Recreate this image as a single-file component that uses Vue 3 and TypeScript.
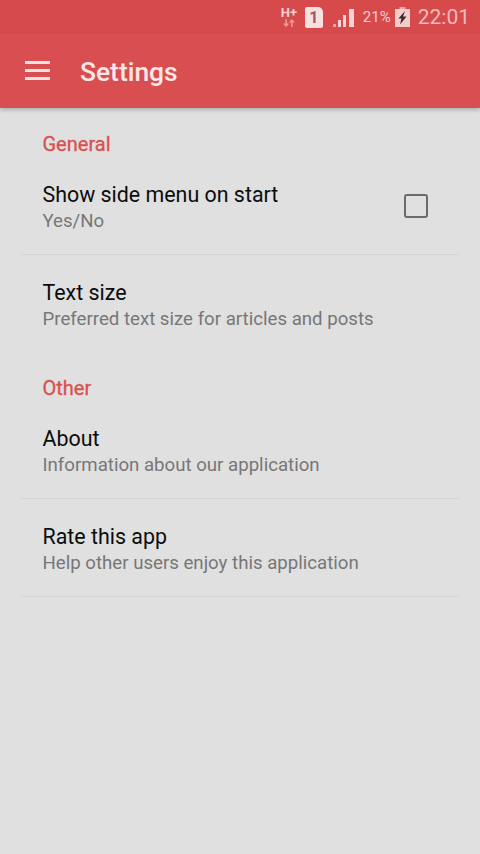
<script setup lang="ts">
interface Row { title: string; sub: string; check?: boolean; divider: boolean }
interface Section { name: string; rows: Row[] }
const sections: Section[] = [
  { name: 'General', rows: [
    { title: 'Show side menu on start', sub: 'Yes/No', check: true, divider: true },
    { title: 'Text size', sub: 'Preferred text size for articles and posts', divider: false },
  ]},
  { name: 'Other', rows: [
    { title: 'About', sub: 'Information about our application', divider: true },
    { title: 'Rate this app', sub: 'Help other users enjoy this application', divider: true },
  ]},
]
</script>

<template>
  <div class="page">
    <div class="status">
      <div class="net"><span class="hp">H+</span><svg width="14" height="8" viewBox="0 0 12 7"><path d="M3.500 0v6M1.500 4l2 2 2-2M8.500 7V1M6.500 3l2-2 2 2" fill="none" stroke="#ee9a9a" stroke-width="1.300"/></svg></div>
      <div class="sim">1</div>
      <svg class="signal" width="22" height="20" viewBox="0 0 22 20">
        <rect x="0" y="17" width="3" height="3" fill="#f0a0a0"/>
        <rect x="5" y="13" width="3" height="7" fill="#f8d4d4"/>
        <rect x="10" y="8" width="3" height="12" fill="#f8d4d4"/>
        <rect x="16" y="2" width="5" height="18" fill="#f8d4d4"/>
      </svg>
      <span class="pct">21%</span>
      <svg class="batt" width="15" height="20" viewBox="0 0 15 20">
        <rect x="4.500" y="0" width="6" height="3" fill="#eda9a9"/>
        <rect x="0" y="2" width="15" height="18" fill="#f3cccc"/>
        <path d="M10 4 3.500 11.500H6.500L5 17.500 11.500 9.500H8Z" fill="#3a2626"/>
      </svg>
      <span class="time">22:01</span>
    </div>
    <header class="bar">
      <div class="burger"><i></i><i></i><i></i></div>
      <h1>Settings</h1>
    </header>
    <main class="list">
      <section v-for="s in sections" :key="s.name" class="section">
        <h2>{{ s.name }}</h2>
        <div v-for="r in s.rows" :key="r.title" class="row" :class="{ line: r.divider }">
          <div class="text">
            <div class="title">{{ r.title }}</div>
            <div class="sub">{{ r.sub }}</div>
          </div>
          <div v-if="r.check" class="box"></div>
        </div>
      </section>
    </main>
  </div>
</template>

<style scoped>
.page { width: 480px; height: 854px; background: #e0e0e0; font-family: Roboto, "Liberation Sans", sans-serif; overflow: hidden; display: flex; flex-direction: column; }
.status { height: 34px; background: #d64a4c; display: flex; align-items: center; justify-content: flex-end; padding-right: 10px; box-sizing: border-box; color: #f7cfcf; }
.net { display: flex; flex-direction: column; align-items: center; width: 18px; margin-right: 7px; }
.hp { font-size: 13px; font-weight: 700; line-height: 12px; color: #f7d3d3; }
.sim { width: 18px; height: 21px; background: #f9e0e0; color: #a35a5c; font-size: 16px; font-weight: 700; text-align: center; line-height: 21px; border-radius: 2px 5px 2px 2px; margin-right: 10px; }
.signal { margin-right: 8px; }
.pct { font-size: 15px; margin-right: 4px; }
.batt { margin-right: 8px; }
.time { font-size: 21px; font-weight: 400; color: #f5b8b8; }
.bar { height: 74px; background: #d84e51; display: flex; align-items: center; padding-top: 2px; box-sizing: border-box; box-shadow: 0 2px 4px rgba(0,0,0,.22); position: relative; }
.burger { margin-left: 25px; width: 25px; display: flex; flex-direction: column; gap: 5px; margin-top: -4px; }
.burger i { display: block; height: 3px; background: #fbe0e0; }
h1 { margin: 0 0 0 30px; font-size: 26.400px; font-weight: 500; color: #fde8e8; }
.list { padding: 0 21px; flex: 1; }
.section { display: flex; flex-direction: column; }
h2 { margin: 0; padding: 22px 0 0 21.500px; height: 48px; box-sizing: border-box; font-size: 20px; font-weight: 400; -webkit-text-stroke: 0.300px #d9504f; color: #d9504f; line-height: 26px; }
.section:first-child h2 { height: 49px; padding-top: 23px; }
.row { height: 98px; box-sizing: border-box; display: flex; align-items: flex-start; justify-content: space-between; padding: 25px 31px 0 21.500px; }
.line { border-bottom: 1px solid #d4d4d4; }
.title { font-size: 21.400px; line-height: 26px; color: #0c0c0c; }
.sub { font-size: 18.650px; line-height: 26px; color: #777; }
.box { width: 24px; height: 24px; box-sizing: border-box; border: 2.500px solid #6a6a6a; border-radius: 3px; margin-top: 12px; }
</style>
